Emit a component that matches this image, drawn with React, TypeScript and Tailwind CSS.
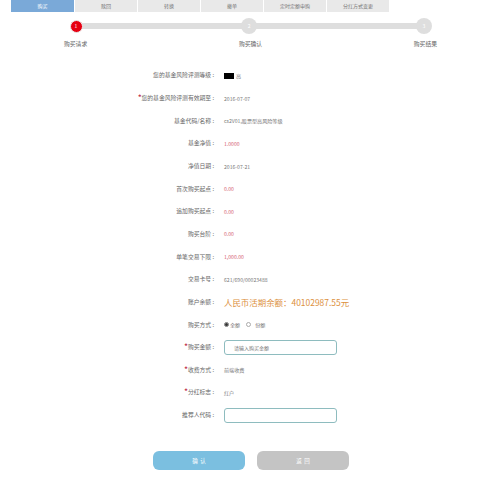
const font = { fontFamily: '"Noto Sans CJK SC", "Liberation Sans", sans-serif' };

const tabs = ['购买', '赎回', '转换', '撤单', '定时定额申购', '分红方式变更'];
const steps = ['购买请求', '购买确认', '购买结果'];

function Row({ label, required, children }: { label: string; required?: boolean; children: React.ReactNode }) {
  return (
    <div className="flex h-[22.65px] items-center">
      <div className="w-[214px] shrink-0 text-right text-[5.8px] whitespace-pre text-[#666]">
        {required && <span className="text-[7px] leading-[5px] font-bold text-[#c0304a]">*</span>}
        {label + ' :'}
      </div>
      <div className="ml-[10px] flex items-center text-[5.1px] text-[#777]">{children}</div>
    </div>
  );
}

function Red({ children }: { children: React.ReactNode }) {
  return <span className="text-[#d4606e]">{children}</span>;
}

export default function App() {
  return (
    <div className="h-[486px] w-[480px] overflow-hidden bg-white" style={font}>
      <div className="ml-[11px] flex h-[12px] w-[379px]">
        {tabs.map((tab, i) => (
          <div
            key={tab}
            className={
              i === 0
                ? 'flex w-[63px] items-center justify-center bg-[#7aa9d8] text-[5px] text-white'
                : 'flex w-[63px] items-center justify-center border-l border-white bg-[#e9e9e9] text-[5px] text-[#777]'
            }
          >
            {tab}
          </div>
        ))}
      </div>

      <div className="mt-[6px] ml-[69.5px] flex h-[16px] w-[362.5px] items-center">
        <div className="z-10 flex h-[13px] w-[13px] shrink-0 items-center justify-center rounded-full border border-[#e8e8e8] bg-[#e60012] text-[5px] text-white">
          1
        </div>
        <div className="-mx-px h-[6px] flex-1 bg-[#dedede]" />
        <div className="z-10 flex h-[16px] w-[16px] shrink-0 items-center justify-center rounded-full bg-[#dedede] text-[5px] text-white">
          2
        </div>
        <div className="-mx-px h-[6px] flex-1 bg-[#dedede]" />
        <div className="z-10 flex h-[16px] w-[16px] shrink-0 items-center justify-center rounded-full bg-[#dedede] text-[5px] text-white">
          3
        </div>
      </div>

      <div className="mt-[6px] ml-[64px] flex w-[373px] justify-between text-[5.8px] leading-[8px] text-[#666]">
        {steps.map((s) => (
          <span key={s}>{s}</span>
        ))}
      </div>

      <div className="mt-[16.5px]">
        <Row label="您的基金风险评测等级">
          <span className="h-[6px] w-[10px] bg-black" />
          <span className="ml-[2px]">高</span>
        </Row>
        <Row label="您的基金风险评测有效期至" required>
          2016-07-07
        </Row>
        <Row label="基金代码/名称">cs2V01,股票型高风险等级</Row>
        <Row label="基金净值">
          <Red>1.0000</Red>
        </Row>
        <Row label="净值日期">2016-07-21</Row>
        <Row label="首次购买起点">
          <Red>0.00</Red>
        </Row>
        <Row label="追加购买起点">
          <Red>0.00</Red>
        </Row>
        <Row label="购买台阶">
          <Red>0.00</Red>
        </Row>
        <Row label="单笔交易下限">
          <Red>1,000.00</Red>
        </Row>
        <Row label="交易卡号">621/690/00023488</Row>
        <Row label="账户余额">
          <span className="text-[8.45px] whitespace-nowrap text-[#dc9040]">{'人民币活期余额\uFF1A40102987.55元'}</span>
        </Row>
        <Row label="购买方式">
          <span className="flex h-[5px] w-[5px] items-center justify-center rounded-full border border-[#777]">
            <span className="h-[3px] w-[3px] rounded-full bg-[#333]" />
          </span>
          <span className="ml-[1px]">全额</span>
          <span className="ml-[6px] h-[5px] w-[5px] rounded-full border border-[#aaa]" />
          <span className="ml-[4px]">份额</span>
        </Row>
        <Row label="购买金额" required>
          <div className="flex h-[15px] w-[113px] items-center rounded-[3px] border border-[#8ebcbf] pl-[9px] text-[5px] text-[#777]">
            请输入购买金额
          </div>
        </Row>
        <Row label="收费方式" required>
          前端收费
        </Row>
        <Row label="分红标志" required>
          红户
        </Row>
        <Row label="推荐人代码">
          <div className="h-[15px] w-[113px] rounded-[3px] border border-[#8ebcbf]" />
        </Row>
      </div>

      <div className="mt-[24.5px] ml-[153px] flex gap-[12px]">
        <div className="flex h-[19px] w-[92px] items-center justify-center rounded-[6px] bg-[#7bbfe0] text-[5.5px] text-white">
          确&nbsp;&nbsp;认
        </div>
        <div className="flex h-[19px] w-[92px] items-center justify-center rounded-[6px] bg-[#c4c4c4] text-[5.5px] text-white">
          返&nbsp;&nbsp;回
        </div>
      </div>
    </div>
  );
}
